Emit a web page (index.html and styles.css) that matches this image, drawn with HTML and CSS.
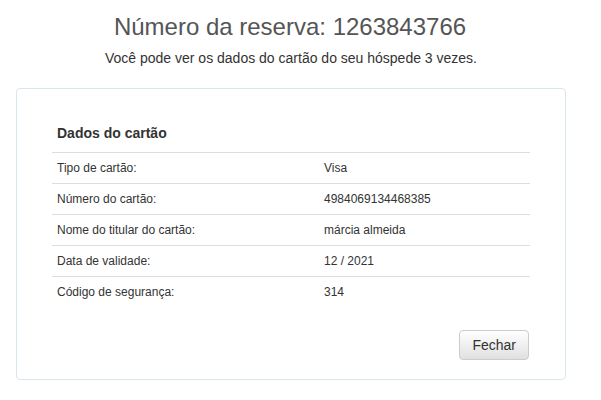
FILE: index.html
```html
<!DOCTYPE html>
<html lang="pt">
<head>
<meta charset="utf-8">
<title>Número da reserva</title>
<link rel="stylesheet" href="styles.css">
</head>
<body>
<h1 class="title">Número da reserva: 1263843766</h1>
<p class="subtitle">Você pode ver os dados do cartão do seu hóspede 3 vezes.</p>
<div class="card">
  <h2 class="card-heading">Dados do cartão</h2>
  <div class="rows">
    <div class="row"><span class="label">Tipo de cartão:</span><span class="value">Visa</span></div>
    <div class="row"><span class="label">Número do cartão:</span><span class="value">4984069134468385</span></div>
    <div class="row"><span class="label">Nome do titular do cartão:</span><span class="value">márcia almeida</span></div>
    <div class="row"><span class="label">Data de validade:</span><span class="value">12 / 2021</span></div>
    <div class="row"><span class="label">Código de segurança:</span><span class="value">314</span></div>
  </div>
  <div class="actions">
    <button class="btn" type="button">Fechar</button>
  </div>
</div>
</body>
</html>
```
FILE: styles.css
```css
* { box-sizing: border-box; }
html, body { background: #fff; }
body {
  margin: 0;
  padding: 14px 35px 0 16px;
  font-family: "Liberation Sans", Arial, sans-serif;
  color: #333;
}
.title {
  margin: 0;
  font-size: 24px;
  line-height: 26px;
  font-weight: normal;
  color: #555;
  text-align: center;
  padding-right: 2px;
}
.subtitle {
  margin: 8px 0 0;
  font-size: 14px;
  line-height: 20px;
  text-align: center;
  color: #333;
}
.card {
  margin-top: 20px;
  width: 550px;
  border: 1px solid #d8e6ed;
  border-radius: 4px;
  padding: 34px 35px 19px 35px;
}
.card-heading {
  margin: 0 0 9px 5px;
  font-size: 14px;
  line-height: 20px;
  font-weight: bold;
  color: #333;
}
.row {
  display: grid;
  grid-template-columns: 267px 1fr;
  border-top: 1px solid #ddd;
  padding: 8px 5px 7px;
  font-size: 12px;
  line-height: 15px;
  color: #333;
}
.actions {
  display: flex;
  justify-content: flex-end;
  margin-top: 23px;
}
.btn {
  font-family: "Liberation Sans", Arial, sans-serif;
  font-size: 14px;
  line-height: 18px;
  height: 30px;
  padding: 5px 12px;
  color: #333;
  background: linear-gradient(#fff, #e0e0e0);
  border: 1px solid #ccc;
  border-radius: 4px;
  margin-right: 1px;
}
```
